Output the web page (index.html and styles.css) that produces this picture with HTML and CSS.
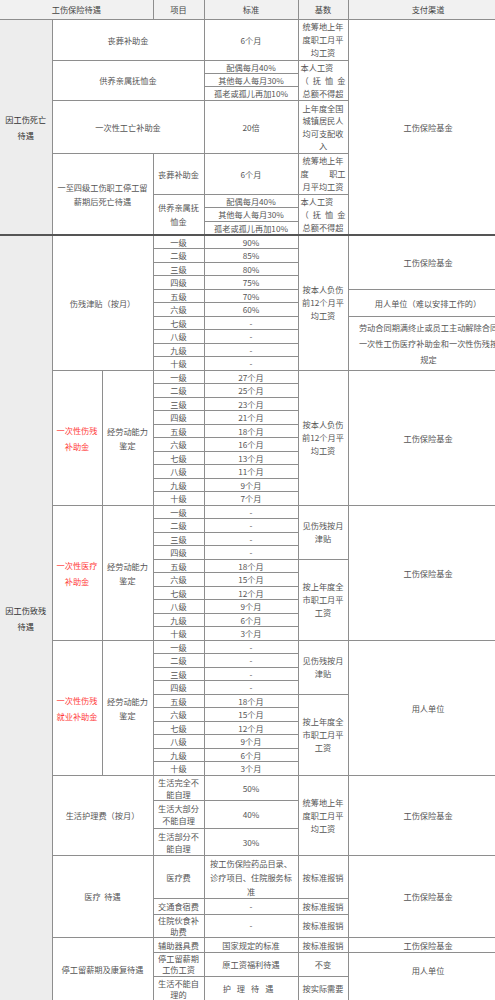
FILE: index.html
```html
<!DOCTYPE html>
<html lang="zh">
<head>
<meta charset="utf-8">
<title>工伤保险待遇</title>
<link rel="stylesheet" href="styles.css">
</head>
<body>
<div class="wrap">
<table class="tbl">
<colgroup><col class="c1"><col class="c2"><col class="c3"><col class="c4"><col class="c5"><col class="c6"><col class="c7"></colgroup>
<tr class="h19 head"><th colspan="3">工伤保险待遇</th><th>项目</th><th>标准</th><th>基数</th><th>支付渠道</th></tr>

<tr class="h41"><td rowspan="9" class="grp">因工伤死亡<br>待遇</td><td colspan="3">丧葬补助金</td><td>6个月</td><td class="jb">统筹地上年度职工月平均工资</td><td rowspan="9">工伤保险基金</td></tr>
<tr class="h13"><td colspan="3" rowspan="3">供养亲属抚恤金</td><td>配偶每月40%</td><td rowspan="3" class="jb"><div class="lft">本人工资</div><div class="spread"><span>（</span><span>抚</span><span>恤</span><span>金</span></div><div>总额不得超</div></td></tr>
<tr class="h13"><td>其他每人每月30%</td></tr>
<tr class="h14"><td>孤老或孤儿再加10%</td></tr>
<tr class="h53"><td colspan="3">一次性工亡补助金</td><td>20倍</td><td class="jb j4">上年度全国城镇居民人均可支配收入</td></tr>
<tr class="h41"><td colspan="2" rowspan="4" class="ml">一至四级工伤职工停工留薪期后死亡待遇</td><td>丧葬补助金</td><td>6个月</td><td class="jb"><div>统筹地上年</div><div class="spread"><span>度</span><span>职工</span></div><div>月平均工资</div></td></tr>
<tr class="h13"><td rowspan="3" class="ml">供养亲属抚恤金</td><td>配偶每月40%</td><td rowspan="3" class="jb"><div class="lft">本人工资</div><div class="spread"><span>（</span><span>抚</span><span>恤</span><span>金</span></div><div>总额不得超</div></td></tr>
<tr class="h14"><td>其他每人每月30%</td></tr>
<tr class="h14"><td>孤老或孤儿再加10%</td></tr>

<tr class="g thick"><td rowspan="49" class="grp">因工伤致残<br>待遇</td><td colspan="2" rowspan="10">伤残津贴（按月）</td><td>一级</td><td>90%</td><td rowspan="10" class="jb">按本人负伤前12个月平均工资</td><td rowspan="4">工伤保险基金</td></tr>
<tr class="g"><td>二级</td><td>85%</td></tr>
<tr class="g"><td>三级</td><td>80%</td></tr>
<tr class="g"><td>四级</td><td>75%</td></tr>
<tr class="g"><td>五级</td><td>70%</td><td rowspan="2">用人单位（难以安排工作的）</td></tr>
<tr class="g"><td>六级</td><td>60%</td></tr>
<tr class="g"><td>七级</td><td>-</td><td rowspan="4" class="long"><div class="longtxt">劳动合同期满终止或员工主动解除合同<br>一次性工伤医疗补助金和一次性伤残按<br>规定</div></td></tr>
<tr class="g"><td>八级</td><td>-</td></tr>
<tr class="g"><td>九级</td><td>-</td></tr>
<tr class="g"><td>十级</td><td>-</td></tr>

<tr class="g"><td rowspan="10" class="red">一次性伤残补助金</td><td rowspan="10" class="ml">经劳动能力鉴定</td><td>一级</td><td>27个月</td><td rowspan="10" class="jb">按本人负伤前12个月平均工资</td><td rowspan="10">工伤保险基金</td></tr>
<tr class="g"><td>二级</td><td>25个月</td></tr>
<tr class="g"><td>三级</td><td>23个月</td></tr>
<tr class="g"><td>四级</td><td>21个月</td></tr>
<tr class="g"><td>五级</td><td>18个月</td></tr>
<tr class="g"><td>六级</td><td>16个月</td></tr>
<tr class="g"><td>七级</td><td>13个月</td></tr>
<tr class="g"><td>八级</td><td>11个月</td></tr>
<tr class="g"><td>九级</td><td>9个月</td></tr>
<tr class="g"><td>十级</td><td>7个月</td></tr>

<tr class="g"><td rowspan="10" class="red">一次性医疗补助金</td><td rowspan="10" class="ml">经劳动能力鉴定</td><td>一级</td><td>-</td><td rowspan="4" class="jb">见伤残按月津贴</td><td rowspan="10">工伤保险基金</td></tr>
<tr class="g"><td>二级</td><td>-</td></tr>
<tr class="g"><td>三级</td><td>-</td></tr>
<tr class="g"><td>四级</td><td>-</td></tr>
<tr class="g"><td>五级</td><td>18个月</td><td rowspan="6" class="jb">按上年度全市职工月平工资</td></tr>
<tr class="g"><td>六级</td><td>15个月</td></tr>
<tr class="g"><td>七级</td><td>12个月</td></tr>
<tr class="g"><td>八级</td><td>9个月</td></tr>
<tr class="g"><td>九级</td><td>6个月</td></tr>
<tr class="g"><td>十级</td><td>3个月</td></tr>

<tr class="g"><td rowspan="10" class="red">一次性伤残就业补助金</td><td rowspan="10" class="ml">经劳动能力鉴定</td><td>一级</td><td>-</td><td rowspan="4" class="jb">见伤残按月津贴</td><td rowspan="10">用人单位</td></tr>
<tr class="g"><td>二级</td><td>-</td></tr>
<tr class="g"><td>三级</td><td>-</td></tr>
<tr class="g"><td>四级</td><td>-</td></tr>
<tr class="g"><td>五级</td><td>18个月</td><td rowspan="6" class="jb">按上年度全市职工月平工资</td></tr>
<tr class="g"><td>六级</td><td>15个月</td></tr>
<tr class="g"><td>七级</td><td>12个月</td></tr>
<tr class="g"><td>八级</td><td>9个月</td></tr>
<tr class="g"><td>九级</td><td>6个月</td></tr>
<tr class="g"><td>十级</td><td>3个月</td></tr>

<tr class="h25"><td colspan="2" rowspan="3">生活护理费（按月）</td><td>生活完全不能自理</td><td>50%</td><td rowspan="3" class="jb">统筹地上年度职工月平均工资</td><td rowspan="3">工伤保险基金</td></tr>
<tr class="h28"><td>生活大部分不能自理</td><td>40%</td></tr>
<tr class="h27"><td>生活部分不能自理</td><td>30%</td></tr>

<tr class="h42"><td colspan="2" rowspan="3">医疗&nbsp;&nbsp;待遇</td><td>医疗费</td><td class="ml">按工伤保险药品目录、诊疗项目、住院服务标准</td><td>按标准报销</td><td rowspan="3">工伤保险基金</td></tr>
<tr class="h16"><td>交通食宿费</td><td>-</td><td>按标准报销</td></tr>
<tr class="h23 t11"><td>住院伙食补助费</td><td>-</td><td>按标准报销</td></tr>

<tr class="h15"><td colspan="2" rowspan="3">停工留薪期及康复待遇</td><td>辅助器具费</td><td>国家规定的标准</td><td>按标准报销</td><td>工伤保险基金</td></tr>
<tr class="h24 t11"><td>停工留薪期工伤工资</td><td>原工资福利待遇</td><td>不变</td><td rowspan="2" class="up">用人单位</td></tr>
<tr class="h25 t11"><td>生活不能自理的</td><td class="spaced">护理待遇</td><td>按实际需要</td></tr>
</table>
</div>
</body>
</html>
```

FILE: styles.css
```css
html, body {
  margin: 0;
  padding: 0;
  background: #ffffff;
}

.wrap {
  width: 495px;
  height: 1000px;
  overflow: hidden;
}

.tbl {
  border-collapse: collapse;
  table-layout: fixed;
  width: 508px;
  font-family: "Noto Sans CJK SC", "Noto Sans", sans-serif;
  font-size: 8.2px;
  line-height: 12px;
  color: #555555;
}

.c1 { width: 52px; }
.c2 { width: 50px; }
.c3 { width: 51px; }
.c4 { width: 51px; }
.c5 { width: 94px; }
.c6 { width: 50px; }
.c7 { width: 160px; }

.tbl th,
.tbl td {
  border: 1px solid #8e8e8e;
  padding: 0 2px;
  text-align: center;
  vertical-align: middle;
  font-weight: normal;
  word-break: break-all;
}

.tbl tr > :first-child {
  border-left: none;
}

.head th {
  background: #f1f1f1;
  color: #444444;
  border-top: none;
}

.grp {
  background: #ededed;
  color: #333333;
  font-weight: bold;
  line-height: 16px;
}

.thick td {
  border-top: 2px solid #555555;
}

.red {
  color: #ff3b3b;
  font-weight: bold;
  line-height: 16px;
}

.ml {
  line-height: 14px;
}

.jb {
  text-align: justify;
  text-align-last: center;
  line-height: 13px;
}

.j4 {
  line-height: 12.5px;
}

.lft {
  text-align: left;
  text-align-last: left;
}

.spread {
  display: flex;
  justify-content: space-between;
}

.long {
  white-space: nowrap;
}

.longtxt {
  width: 156px;
  overflow: hidden;
  line-height: 16px;
}

.spaced {
  letter-spacing: 6px;
}

.t11 td {
  line-height: 11px;
}

.tbl .up {
  vertical-align: top;
  padding-top: 12px;
}

.h13 { height: 13px; }
.h14 { height: 14px; }
.h15 { height: 15px; }
.h16 { height: 16px; }
.h19 { height: 19px; }
.h23 { height: 23px; }
.h24 { height: 24px; }
.h25 { height: 25px; }
.h27 { height: 27px; }
.h28 { height: 28px; }
.h41 { height: 41px; }
.h42 { height: 42px; }
.h53 { height: 53px; }
.g { height: 13.5px; }
```
